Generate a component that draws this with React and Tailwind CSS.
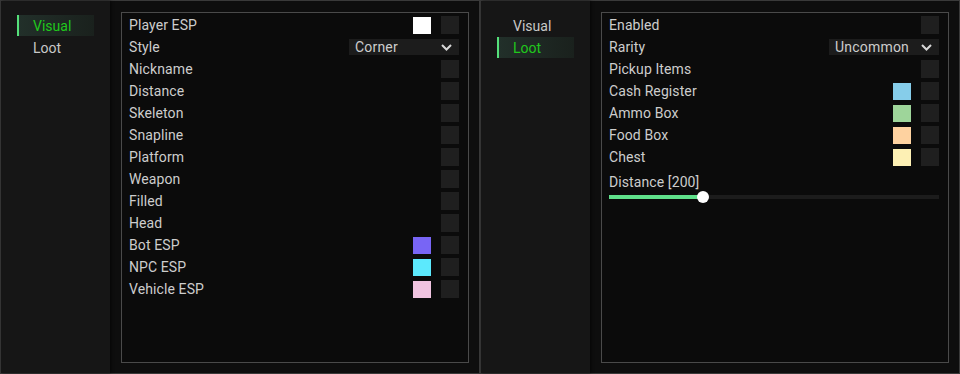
import React from "react";

const font = { fontFamily: "Roboto, 'Noto Sans', sans-serif" };

function Chevron() {
  return (
    <svg width="11" height="7" viewBox="0 0 11 7" fill="none">
      <path d="M1 1 L5.5 5.5 L10 1" stroke="#d8d8d8" strokeWidth="2" />
    </svg>
  );
}

function Check() {
  return <div className="w-[18px] h-[18px] bg-[#1f1f1f]" />;
}

function Row({ label, swatch, dropdown, noCheck }) {
  return (
    <div className="h-[22px] flex items-center justify-between">
      <span className="text-[14px] text-[#cdcdcd] leading-none tracking-[0.1px]">{label}</span>
      <div className="flex items-center gap-[10px]">
        {swatch && <div className="w-[18px] h-[17px]" style={{ background: swatch }} />}
        {dropdown && (
          <div className="w-[110px] h-[16px] bg-[#1c1c1c] flex items-center justify-between pl-[6px] pr-[7px]">
            <span className="text-[14px] text-[#cdcdcd] leading-none tracking-[0.2px]">{dropdown}</span>
            <Chevron />
          </div>
        )}
        {!dropdown && !noCheck && <Check />}
      </div>
    </div>
  );
}

function Window({ active, children }) {
  return (
    <div className="w-[480px] h-[374px] border border-[#3a3a3a] flex bg-[#0e0e0e]">
      <div className="w-[109px] h-full bg-[#161616] pt-[14px] pl-[16px] shadow-[1px_0_3px_rgba(0,0,0,0.6)]">
        {["Visual", "Loot"].map((t) => (
          <div
            key={t}
            className={
              "w-[77px] h-[21px] flex items-center pl-[16px] text-[14px] leading-none relative mb-[1px] " +
              (t === active
                ? "bg-gradient-to-r from-[#22302a] to-[#1a211d] text-[#20c81c]"
                : "text-[#c8c8c8]")
            }
          >
            {t === active && <div className="absolute left-0 top-0 w-[2px] h-full bg-[#55e07a]" />}
            {t}
          </div>
        ))}
      </div>
      <div className="flex-1 pl-[11px] pr-[10px] pt-[11px] pb-[10px]">
        <div className="w-full h-full border border-[#4a4a4a] bg-[#0b0b0b] pl-[7px] pr-[9px] pt-[1px]">
          {children}
        </div>
      </div>
    </div>
  );
}

export default function App() {
  return (
    <div className="w-[960px] h-[374px] flex bg-[#0e0e0e] overflow-hidden" style={font}>
      <Window active="Visual">
        <Row label="Player ESP" swatch="#ffffff" />
        <Row label="Style" dropdown="Corner" />
        <Row label="Nickname" />
        <Row label="Distance" />
        <Row label="Skeleton" />
        <Row label="Snapline" />
        <Row label="Platform" />
        <Row label="Weapon" />
        <Row label="Filled" />
        <Row label="Head" />
        <Row label="Bot ESP" swatch="#7865f5" />
        <Row label="NPC ESP" swatch="#5ce9fd" />
        <Row label="Vehicle ESP" swatch="#f0c3e0" />
      </Window>
      <Window active="Loot">
        <Row label="Enabled" />
        <Row label="Rarity" dropdown="Uncommon" />
        <Row label="Pickup Items" />
        <Row label="Cash Register" swatch="#86cdea" />
        <Row label="Ammo Box" swatch="#9ed59a" />
        <Row label="Food Box" swatch="#fed2a0" />
        <Row label="Chest" swatch="#fdf0b4" />
        <div className="pt-[7px]">
          <div className="text-[14px] text-[#cdcdcd] leading-none tracking-[0.1px]">Distance [200]</div>
          <div className="relative mt-[6px] h-[4px] bg-[#1c1c1c]">
            <div className="absolute left-0 top-0 h-full w-[94px] bg-[#5fe08a]" />
            <div className="absolute left-[88px] top-[-4px] w-[12px] h-[12px] rounded-full bg-white" />
          </div>
        </div>
      </Window>
    </div>
  );
}
